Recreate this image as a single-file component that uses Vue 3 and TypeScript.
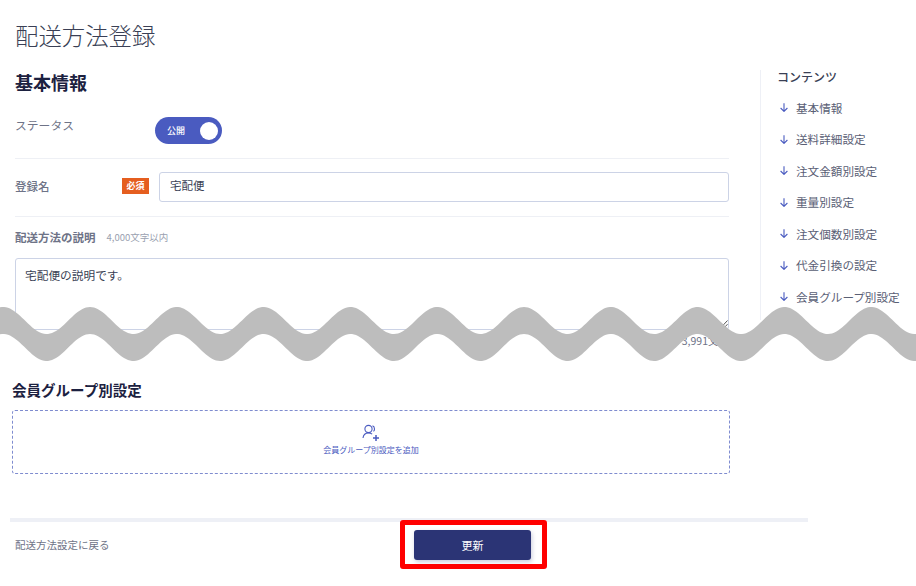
<template>
  <div class="page">
    <h1 class="page-title">配送方法登録</h1>
    <div class="top">
      <main class="main">
        <h2 class="section-title">基本情報</h2>
        <div class="row row-status">
          <span class="label">ステータス</span>
          <div class="toggle">
            <span class="toggle-text">公開</span>
            <span class="toggle-knob"></span>
          </div>
        </div>
        <div class="row row-name">
          <span class="label-name">登録名</span>
          <span class="required">必須</span>
          <div class="input">宅配便</div>
        </div>
        <div class="desc-head">
          <span class="desc-label">配送方法の説明</span>
          <span class="desc-limit">4,000文字以内</span>
        </div>
        <div class="textarea">
          宅配便の説明です。
          <svg class="resize" width="8" height="9" viewBox="0 0 8 9" fill="none" stroke="#555" stroke-width="1">
            <path d="M0.500 8L7.500 0.500M3.500 8.500L7.500 4.200" />
          </svg>
        </div>
        <div class="counter">残り3,991文字</div>
      </main>
      <aside class="side">
        <div class="side-title">コンテンツ</div>
        <a v-for="item in menu" :key="item" class="side-item">
          <svg class="arrow" width="8" height="9" viewBox="0 0 8 9" fill="none" stroke="#4a5bc0" stroke-width="1.1">
            <path d="M4 0.300V8.300M0.600 5l3.400 3.400 3.400-3.400" />
          </svg>
          {{ item }}
        </a>
      </aside>
    </div>

    <section class="group">
      <h3 class="group-title">会員グループ別設定</h3>
      <div class="add-box">
        <svg class="add-icon" width="18" height="18" viewBox="0 0 18 18" fill="none" stroke="#4a5bc0" stroke-width="1.1">
          <circle cx="6.500" cy="5" r="3.600" />
          <path d="M1 14c0.400-3.200 2.600-5 5.500-5 1.500 0 2.700 0.400 3.600 1.200" />
          <path d="M10.500 1.800c1.300 0.500 2 1.700 2 3.100 0 1-0.400 1.900-1.100 2.500" />
          <path d="M14 11v6M11 14h6" stroke-width="1.500" />
        </svg>
        <span class="add-text">会員グループ別設定を追加</span>
      </div>
    </section>

    <footer class="footer">
      <span class="back">配送方法設定に戻る</span>
      <div class="submit-wrap">
        <button class="submit" type="button">更新</button>
        <span class="highlight"></span>
      </div>
    </footer>

    <!-- 省略の波線 -->
    <svg class="wave" width="916" height="70" viewBox="0 0 916 70">
      <path :d="wavePath" fill="#bdbdbd" />
    </svg>
  </div>
</template>

<script setup lang="ts">
const menu: string[] = [
  '基本情報',
  '送料詳細設定',
  '注文金額別設定',
  '重量別設定',
  '注文個数別設定',
  '代金引換の設定',
  '会員グループ別設定',
]

// 上下の線を同じ波にして、縦の太さを一定にする
const buildWave = (): string => {
  const period = 86.8
  const thick = 27
  const waveY = (x: number) => 20.5 - 13.5 * Math.cos((2 * Math.PI * (x - 90)) / period)
  const top: string[] = []
  const bottom: string[] = []
  for (let x = -4; x <= 920; x += 2) {
    top.push(`${x} ${waveY(x).toFixed(2)}`)
    bottom.unshift(`${x} ${(waveY(x) + thick).toFixed(2)}`)
  }
  return `M${top.join('L')}L${bottom.join('L')}Z`
}

const wavePath = buildWave()
</script>

<style scoped>
.page {
  position: relative;
  width: 916px;
  height: 586px;
  overflow: hidden;
  background: #fff;
  color: #333;
  font-family: "Noto Sans CJK JP", "Noto Sans", sans-serif;
}

.page-title {
  margin: 0;
  padding: 17px 0 0 15px;
  font-size: 23.400px;
  line-height: 37px;
  font-weight: 300;
  color: #3a3f55;
}

.top {
  display: flex;
  margin-top: 16px;
  height: 310px;
}

.main {
  width: 714px;
  margin-left: 15px;
}

.section-title {
  margin: 0;
  font-size: 18px;
  line-height: 24px;
  font-weight: 700;
  color: #1c2140;
}

.row {
  display: flex;
  border-bottom: 1px solid #eef0f5;
}

.row-status {
  padding: 21px 0 14px;
}

.label {
  width: 140px;
  font-size: 11.800px;
  line-height: 20px;
  color: #6e7387;
}

.toggle {
  display: flex;
  align-items: center;
  justify-content: space-between;
  width: 67px;
  height: 27px;
  margin-top: 2px;
  padding: 0 4px 0 12px;
  box-sizing: border-box;
  border-radius: 14px;
  background: #4a5bc0;
}

.toggle-text {
  font-size: 9px;
  font-weight: 500;
  color: #fff;
}

.toggle-knob {
  width: 18px;
  height: 18px;
  border-radius: 50%;
  background: #fff;
}

.row-name {
  align-items: center;
  height: 56px;
  padding-bottom: 1px;
}

.label-name {
  width: 107px;
  margin-top: -2px;
  font-size: 11.500px;
  font-weight: 500;
  color: #6e7387;
}

.required {
  width: 27px;
  height: 16px;
  margin: -2px 10px 0 0;
  background: #e55e1f;
  color: #fff;
  font-size: 9px;
  font-weight: 700;
  line-height: 15px;
  text-align: center;
}

.input {
  flex: 1;
  height: 30px;
  padding-left: 10px;
  box-sizing: border-box;
  border: 1px solid #ccd3e6;
  border-radius: 3px;
  font-size: 11.500px;
  line-height: 25px;
  color: #3a3f55;
}

.desc-head {
  display: flex;
  align-items: center;
  gap: 11px;
  height: 20px;
  margin-top: 10px;
}

.desc-label {
  font-size: 11.500px;
  font-weight: 700;
  color: #6e7387;
}

.desc-limit {
  font-size: 9.500px;
  color: #9a9fb0;
}

.textarea {
  position: relative;
  height: 72px;
  margin-top: 11px;
  padding: 6px 9px;
  box-sizing: border-box;
  border: 1px solid #ccd3e6;
  border-radius: 3px;
  font-size: 11.700px;
  line-height: 20px;
  color: #3a3f55;
}

.resize {
  position: absolute;
  right: 0;
  bottom: 0;
}

.counter {
  margin-top: 2px;
  font-size: 10.500px;
  line-height: 18px;
  color: #6e7387;
  text-align: right;
}

.side {
  width: 156px;
  height: 250px;
  margin-left: 31px;
  padding-left: 16px;
  box-sizing: border-box;
  border-left: 1px solid #eef0f6;
}

.side-title {
  font-size: 12px;
  font-weight: 500;
  line-height: 14px;
  color: #3a3f55;
}

.side-item {
  display: flex;
  align-items: center;
  height: 31.500px;
  font-size: 11.600px;
  color: #5a6075;
  white-space: nowrap;
}

.side-item:nth-child(2) {
  margin-top: 8px;
}

.arrow {
  flex: none;
  margin: 0 8px 0 3px;
}

.group {
  width: 718px;
  margin-left: 12px;
}

.group-title {
  margin: 0;
  font-size: 14.500px;
  line-height: 20px;
  font-weight: 700;
  color: #1c2140;
}

.add-box {
  display: flex;
  flex-direction: column;
  align-items: center;
  height: 64px;
  margin-top: 10px;
  padding-top: 13px;
  box-sizing: border-box;
  border: 1px dashed #7f8ccf;
  border-radius: 3px;
}

.add-text {
  margin-top: 2px;
  font-size: 8px;
  line-height: 12px;
  color: #4a5bc0;
}

.footer {
  display: flex;
  align-items: center;
  width: 798px;
  height: 50px;
  margin: 44px 0 0 10px;
  padding-left: 5px;
  box-sizing: border-box;
  border-top: 4px solid #eef0f6;
}

.back {
  width: 399px;
  margin-top: -2px;
  font-size: 10.500px;
  color: #6e7387;
}

.submit-wrap {
  position: relative;
}

.submit {
  display: block;
  width: 117px;
  height: 30px;
  padding: 0;
  border: none;
  border-radius: 3px;
  background: #2b3475;
  color: #fff;
  font-family: inherit;
  font-size: 11px;
  box-shadow: 1px 2px 4px rgba(43, 52, 117, 0.25);
}

.highlight {
  position: absolute;
  top: -10px;
  left: -14px;
  width: 147px;
  height: 49px;
  box-sizing: border-box;
  border: 5px solid #ff0000;
  border-radius: 3px;
}

.wave {
  position: absolute;
  top: 300px;
  left: 0;
}
</style>
